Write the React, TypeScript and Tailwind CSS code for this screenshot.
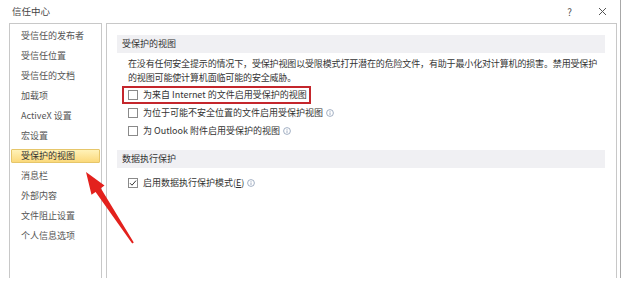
import React from "react";

const sideItems = [
  "受信任的发布者",
  "受信任位置",
  "受信任的文档",
  "加载项",
  "ActiveX 设置",
  "宏设置",
  "受保护的视图",
  "消息栏",
  "外部内容",
  "文件阻止设置",
  "个人信息选项",
];

function Info() {
  return (
    <svg width="8" height="8" viewBox="0 0 8 8" className="ml-[3px] inline-block">
      <circle cx="4" cy="4" r="3.4" fill="none" stroke="#8a9ab4" strokeWidth="0.8" />
      <rect x="3.6" y="3.4" width="0.8" height="2.6" fill="#8a9ab4" />
      <rect x="3.6" y="2" width="0.8" height="0.8" fill="#8a9ab4" />
    </svg>
  );
}

function Box({ checked }: { checked?: boolean }) {
  return (
    <div className="flex h-[10px] w-[10px] shrink-0 items-center justify-center border border-[#8a8a8a] bg-white">
      {checked && (
        <svg width="8" height="8" viewBox="0 0 8 8">
          <path d="M1 4.2 L3 6.2 L7 1.6" fill="none" stroke="#333" strokeWidth="1" />
        </svg>
      )}
    </div>
  );
}

function Row({ children, checked }: { children: React.ReactNode; checked?: boolean }) {
  return (
    <div className="flex h-[18px] items-center gap-[5px] pl-[11px]">
      <Box checked={checked} />
      <span className="flex items-center">{children}</span>
    </div>
  );
}

function SectionHead({ title }: { title: string }) {
  return (
    <div className="flex h-[18px] items-center bg-[#f0f0f3] pl-[5px] text-[9px] text-[#333]">
      {title}
    </div>
  );
}

export default function App() {
  return (
    <div
      className="relative h-[302px] w-[640px] overflow-hidden bg-white text-[9px] text-[#3c3c3c]"
      style={{ fontFamily: '"Noto Sans CJK SC", "Noto Sans", sans-serif' }}
    >
      <div className="h-[278px] w-[621px] border-r border-[#a8a8a8]">
        <div className="flex h-[23px] items-center justify-between pl-[12px] pr-[13px]">
          <span className="text-[9.5px] text-[#444]">信任中心</span>
          <div className="flex items-center gap-[26px] text-[#555]">
            <span className="text-[10px]">?</span>
            <svg width="9" height="9" viewBox="0 0 9 9">
              <path d="M1 1 L8 8 M8 1 L1 8" stroke="#555" strokeWidth="1" />
            </svg>
          </div>
        </div>
        <div className="flex h-[255px] gap-[4px] pl-[9px]">
          <div className="h-full w-[93px] border border-b-0 border-[#c8c8c8] px-px pt-[2px]">
            {sideItems.map((t) =>
              t === "受保护的视图" ? (
                <div
                  key={t}
                  className="my-[3px] flex h-[14px] items-center rounded-[1px] border border-[#e6c66a] bg-gradient-to-b from-[#fff2b8] to-[#fbd97a] pl-[9px] text-[#333]"
                >
                  {t}
                </div>
              ) : (
                <div key={t} className="flex h-[20px] items-center pl-[10px] text-[#555]">
                  {t}
                </div>
              )
            )}
          </div>
          <div className="h-full w-[511px] border border-b-0 border-[#c8c8c8] pl-[10px] pr-[11px] pt-[11px]">
            <SectionHead title="受保护的视图" />
            <div className="pl-[11px] pt-[4px] leading-[14px] tracking-[-0.15px] text-[#333]">
              <div>在没有任何安全提示的情况下，受保护视图以受限模式打开潜在的危险文件，有助于最小化对计算机的损害。禁用受保护</div>
              <div>的视图可能使计算机面临可能的安全威胁。</div>
            </div>
            <div className="pt-[1px] text-[#333]">
              <div className="relative">
                <Row>为来自 Internet 的文件启用受保护的视图</Row>
                <div className="absolute left-[5px] top-0 h-[18px] w-[189px] border-2 border-[#c4262c]" />
              </div>
              <Row>
                为位于可能不安全位置的文件启用受保护视图
                <Info />
              </Row>
              <Row>
                为 Outlook 附件启用受保护的视图
                <Info />
              </Row>
            </div>
            <div className="mt-[10px]">
              <SectionHead title="数据执行保护" />
            </div>
            <div className="pt-[6px] text-[#333]">
              <Row checked>
                启用数据执行保护模式(<span className="underline">E</span>)
                <Info />
              </Row>
            </div>
          </div>
        </div>
      </div>
      <svg
        className="pointer-events-none absolute left-0 top-0"
        width="640"
        height="302"
        viewBox="0 0 640 302"
      >
        <polygon
          points="86,172 104.5,185.5 100.8,188.3 133.8,242.5 132.2,243.5 95.6,191.9 91.5,194.8"
          fill="#e3211d"
        />
      </svg>
    </div>
  );
}
